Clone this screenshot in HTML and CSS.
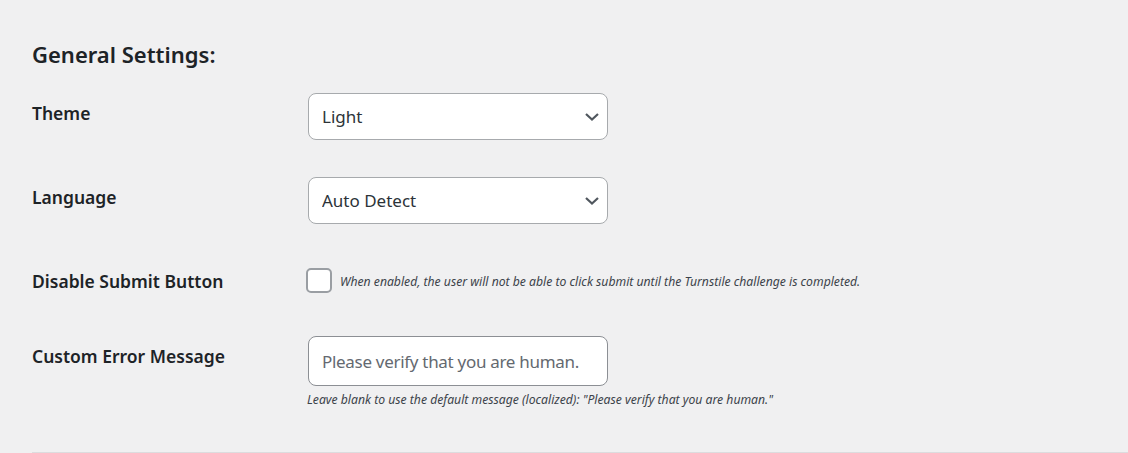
FILE: index.html
```html
<!DOCTYPE html>
<html lang="en">
<head>
<meta charset="utf-8">
<title>General Settings</title>
<link rel="stylesheet" href="styles.css">
</head>
<body>
<div class="wrap">
  <h2 class="section-title">General Settings:</h2>
  <div class="form-table">
    <div class="row">
      <div class="label">Theme</div>
      <div class="field">
        <div class="select-wrap">
          <select class="select"><option>Light</option></select>
          <svg class="chevron" viewBox="0 0 14 8" width="14" height="8"><path d="M1 1l6 5.5L13 1" fill="none" stroke="#50575e" stroke-width="2.2"/></svg>
        </div>
      </div>
    </div>
    <div class="row">
      <div class="label">Language</div>
      <div class="field">
        <div class="select-wrap">
          <select class="select"><option>Auto Detect</option></select>
          <svg class="chevron" viewBox="0 0 14 8" width="14" height="8"><path d="M1 1l6 5.5L13 1" fill="none" stroke="#50575e" stroke-width="2.2"/></svg>
        </div>
      </div>
    </div>
    <div class="row row-check">
      <div class="label">Disable Submit Button</div>
      <div class="field check-field">
        <span class="checkbox"></span>
        <span class="desc">When enabled, the user will not be able to click submit until the Turnstile challenge is completed.</span>
      </div>
    </div>
    <div class="row row-last">
      <div class="label">Custom Error Message</div>
      <div class="field">
        <input class="text-input" type="text" placeholder="Please verify that you are human.">
        <p class="desc desc-below">Leave blank to use the default message (localized): "Please verify that you are human."</p>
      </div>
    </div>
  </div>
</div>
</body>
</html>
```

FILE: styles.css
```css
html, body {
  margin: 0;
  padding: 0;
  background: #f0f0f1;
}
body {
  font-family: "Noto Sans", "Open Sans", sans-serif;
  color: #1d2327;
  width: 1128px;
  height: 453px;
  overflow: hidden;
}
.wrap {
  padding: 0 0 0 32px;
}
.section-title {
  margin: 0;
  padding-top: 38px;
  font-size: 22px;
  line-height: 32px;
  font-weight: 600;
  color: #1d2327;
}
.form-table {
  margin-top: 4px;
  width: 1096px;
  border-bottom: 1px solid #dcdcde;
}
.row {
  display: grid;
  grid-template-columns: 263px 1fr;
}
.label {
  padding: 28px 12px 22px 0;
  font-size: 17.5px;
  line-height: 22px;
  font-weight: 600;
  color: #1d2327;
}
.field {
  padding: 19px 12px 18px 13px;
}
.select-wrap {
  position: relative;
  width: 300px;
}
.select {
  appearance: none;
  -webkit-appearance: none;
  display: block;
  width: 300px;
  height: 47px;
  margin: 0;
  padding: 0 30px 0 13px;
  border: 1px solid #a7aaad;
  border-radius: 8px;
  background: #fff;
  font-family: "Noto Sans", "Open Sans", sans-serif;
  font-size: 17px;
  color: #2c3338;
}
.chevron {
  position: absolute;
  right: 9px;
  top: 20px;
}
.check-field {
  display: flex;
  align-items: center;
  gap: 8px;
  padding-left: 11px;
  padding-top: 26px;
  padding-bottom: 24px;
}
.checkbox {
  display: block;
  flex: none;
  width: 22px;
  height: 21px;
  border: 2px solid #9a9ea3;
  border-radius: 5px;
  background: #fff;
}
.desc {
  font-style: italic;
  font-size: 12.2px;
  line-height: 16px;
  color: #3c434a;
  margin: 0;
}
.row-check .desc {
  padding-top: 2px;
}
.text-input {
  display: block;
  box-sizing: border-box;
  width: 300px;
  height: 50px;
  margin: 0;
  padding: 0 13px;
  border: 1px solid #8c8f94;
  border-radius: 8px;
  background: #fff;
  font-family: "Noto Sans", "Open Sans", sans-serif;
  font-size: 17px;
  letter-spacing: -0.3px;
  color: #2c3338;
}
.text-input::placeholder {
  color: #646970;
}
.desc-below {
  margin-top: 6px;
  margin-left: -1px;
}
.row-last .field {
  padding-bottom: 44px;
}
```
